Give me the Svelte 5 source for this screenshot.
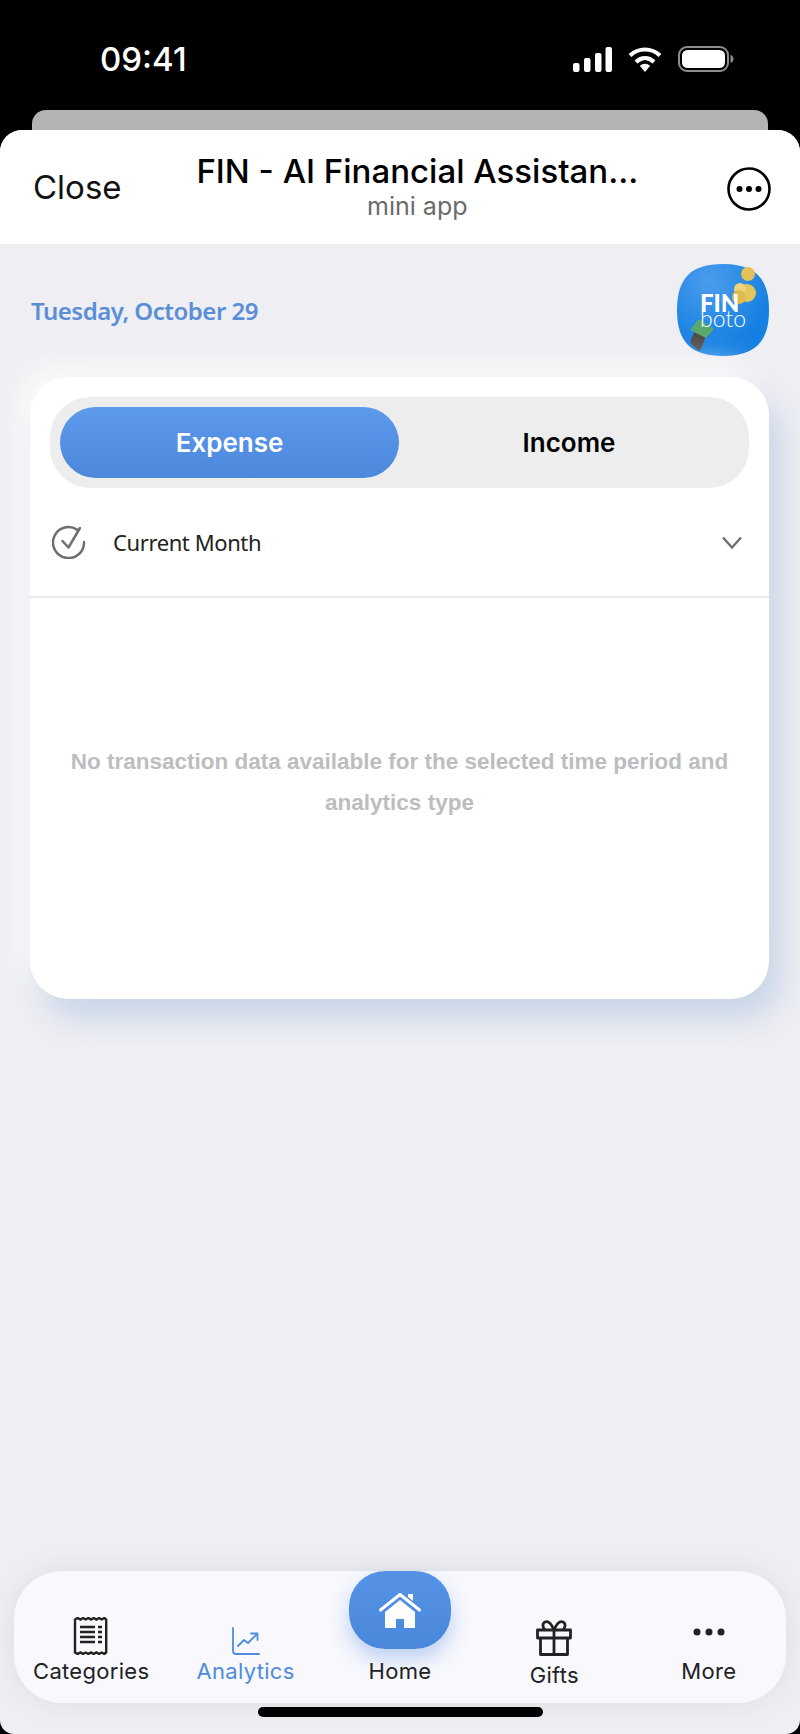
<script>
  const tabs = [
    { label: "Categories", icon: "receipt" },
    { label: "Analytics", icon: "chart", active: true },
    { label: "Home", icon: "home", fab: true },
    { label: "Gifts", icon: "gift", low: true },
    { label: "More", icon: "dots" }
  ];
</script>

<div class="phone">
  <div class="status">
    <span class="time">09:41</span>
    <div class="status-icons">
      <svg width="39" height="25" viewBox="0 0 39 25" fill="#fff">
        <rect x="0" y="16" width="6.5" height="9" rx="2" />
        <rect x="11" y="11" width="6.5" height="14" rx="2" />
        <rect x="22" y="6" width="6.5" height="19" rx="2" />
        <rect x="32.5" y="0" width="6.5" height="25" rx="2" />
      </svg>
      <svg width="34" height="25" viewBox="0 0 34 25">
        <path d="M2 8.5C10.5 .5 23.5 .5 32 8.5" fill="none" stroke="#fff" stroke-width="4.2" />
        <path d="M8 15C13.5 9.8 20.5 9.8 26 15" fill="none" stroke="#fff" stroke-width="4.2" />
        <path d="M11.8 18.8C15 16 19 16 22.2 18.8L17 25Z" fill="#fff" />
      </svg>
      <svg width="56" height="26" viewBox="0 0 56 26">
        <rect x="1" y="1" width="49" height="24" rx="8" fill="none" stroke="#8e8e8e" stroke-width="2" />
        <rect x="4" y="4" width="43" height="18" rx="5.5" fill="#fff" />
        <path d="M52.5 9v8c2-.6 3-2.2 3-4s-1-3.400-3-4z" fill="#8e8e8e" />
      </svg>
    </div>
  </div>
  <div class="peek"></div>

  <div class="sheet">
    <header class="mini-header">
      <span class="close">Close</span>
      <div class="title-wrap">
        <div class="title">FIN - AI Financial Assistan...</div>
        <div class="subtitle">mini app</div>
      </div>
      <svg class="more-btn" width="44" height="44" viewBox="0 0 44 44">
        <circle cx="22" cy="22" r="20.500" fill="none" stroke="#000" stroke-width="2.600" />
        <circle cx="12.500" cy="22" r="3" />
        <circle cx="22" cy="22" r="3" />
        <circle cx="31.500" cy="22" r="3" />
      </svg>
    </header>

    <div class="date-row">
      <span class="date">Tuesday, October 29</span>
      <svg class="logo" width="92" height="92" viewBox="0 0 92 92">
        <defs>
          <radialGradient id="logoBg" cx="0.35" cy="0.2" r="0.7">
            <stop offset="0" stop-color="#4b9cec" />
            <stop offset="1" stop-color="#1580e2" />
          </radialGradient>
        </defs>
        <path d="M46 0C78 0 92 14 92 46S78 92 46 92 0 78 0 46 14 0 46 0Z" fill="url(#logoBg)" />
        <path d="M13 78l6-14 11 6-7 17c-4-2-7-5-10-9Z" fill="#4f4b4a" />
        <path d="M13 66l9-11 15 10-8 9Z" fill="#59a86a" />
        <circle cx="71" cy="10" r="7" fill="#e0c15a" />
        <circle cx="70" cy="29" r="9" fill="#e6c65a" />
        <circle cx="63" cy="25" r="6" fill="#efd57a" />
        <circle cx="62" cy="33" r="7" fill="#dfbc4f" />
        <text class="logo-fin" x="23" y="48">FIN</text>
        <text class="logo-boto" x="23" y="63">boto</text>
      </svg>
    </div>

    <section class="card">
      <div class="toggle">
        <div class="seg active">Expense</div>
        <div class="seg">Income</div>
      </div>

      <div class="period">
        <svg width="34" height="34" viewBox="0 0 34 34" fill="none" stroke="#6f6f6f" stroke-width="2.500" stroke-linecap="round" stroke-linejoin="round">
          <path d="M25 4.600A15.500 15.500 0 1 0 32 17" />
          <path d="M10.500 16l6 6.500L28 3" />
        </svg>
        <span class="period-label">Current Month</span>
        <svg class="chevron" width="20" height="13" viewBox="0 0 20 13" fill="none" stroke="#6f6f6f" stroke-width="2.400">
          <path d="M1 1.500l9 10 9-10" />
        </svg>
      </div>

      <p class="empty">No transaction data available for the selected time period and analytics type</p>
    </section>

    <nav class="tabbar">
      {#each tabs as tab}
        <div class="tab" class:active={tab.active} class:low={tab.low} class:fab-tab={tab.fab}>
          {#if tab.icon === "receipt"}
            <svg width="36" height="38" viewBox="0 0 36 38" fill="none" stroke="#222" stroke-width="2.400">
              <path d="M2 2.500l2.700-1.500 2.700 1.500 2.600-1.500 2.700 1.500 2.700-1.500 2.600 1.500 2.700-1.500 2.700 1.500 2.600-1.500 2.700 1.500 2.700-1.500 1.800 1.500v33l-1.800 1.500-2.700-1.500-2.700 1.500-2.600-1.500-2.700 1.500-2.700-1.500-2.600 1.500-2.700-1.500-2.700 1.500-2.600-1.500-2.700 1.500-2.700-1.500z" />
              <path d="M7 10h15M7 15h15M7 20h15M7 25h15" />
              <path d="M25 10h4M25 15h4M25 20h4M25 25h4" />
            </svg>
          {:else if tab.icon === "chart"}
            <svg width="28" height="28" viewBox="0 0 28 28" fill="none" stroke="#4f8cde" stroke-width="1.800" stroke-linecap="round" stroke-linejoin="round">
              <path d="M1 1v23a3 3 0 0 0 3 3h23" />
              <path d="M6 19l6-6 4 3 9-9" />
              <path d="M19 6.500h6.500V13" />
            </svg>
          {:else if tab.icon === "home"}
            <div class="fab">
              <svg width="42" height="38" viewBox="0 0 42 38" fill="#fff">
                <path d="M29 3h5v7l-5-4z" />
                <path d="M21 3.500L1.500 19" fill="none" stroke="#fff" stroke-width="3" stroke-linecap="round" />
                <path d="M21 3.500L40.500 19" fill="none" stroke="#fff" stroke-width="3" stroke-linecap="round" />
                <path d="M21 9L6 21v16h11v-9h8v9h11V21z" />
              </svg>
            </div>
          {:else if tab.icon === "gift"}
            <svg width="36" height="36" viewBox="0 0 36 36" fill="none" stroke="#222" stroke-width="2.800" stroke-linejoin="round">
              <rect x="1.500" y="10" width="33" height="8" />
              <path d="M4.500 18v16.500h27V18M18 10v24.500" />
              <path d="M18 10C15 3 11.500 1 9 2s-3 5 0 8M18 10c3-7 6.500-9 9-8s3 5 0 8" />
            </svg>
          {:else}
            <svg class="dots" width="32" height="8" viewBox="0 0 32 8" fill="#222">
              <circle cx="4" cy="4" r="3.500" />
              <circle cx="16" cy="4" r="3.500" />
              <circle cx="28" cy="4" r="3.500" />
            </svg>
          {/if}
          <span class="tab-label">{tab.label}</span>
        </div>
      {/each}
    </nav>
    <div class="home-bar"></div>
  </div>
</div>

<style>
  :global(body) {
    margin: 0;
    background: #000;
  }

  .phone {
    width: 800px;
    height: 1734px;
    display: flex;
    flex-direction: column;
    background: #000;
    overflow: hidden;
    font-family: Inter, "Liberation Sans", sans-serif;
  }

  .status {
    height: 110px;
    flex: none;
    box-sizing: border-box;
    padding: 46px 66px 0 100px;
    display: flex;
    justify-content: space-between;
    align-items: flex-start;
    color: #fff;
  }

  .time {
    font-size: 33px;
    font-weight: 500;
    line-height: 26px;
  }

  .status-icons {
    display: flex;
    align-items: center;
    gap: 16px;
    height: 26px;
  }

  .peek {
    height: 20px;
    flex: none;
    margin: 0 32px;
    background: #b3b3b3;
    border-radius: 14px 14px 0 0;
  }

  .sheet {
    flex: 1;
    display: flex;
    flex-direction: column;
    background: #eeeef3;
    border-radius: 22px 22px 14px 14px;
    overflow: hidden;
  }

  .mini-header {
    height: 114px;
    flex: none;
    box-sizing: border-box;
    background: #fff;
    display: flex;
    align-items: flex-start;
    justify-content: space-between;
    padding: 0 29px 0 33px;
  }

  .close {
    font-size: 33px;
    line-height: 40px;
    margin-top: 37px;
    color: #111;
  }

  .title-wrap {
    text-align: center;
    margin-top: 21px;
    margin-left: -14px;
  }

  .title {
    font-size: 33px;
    font-weight: 500;
    line-height: 40px;
    color: #000;
  }

  .subtitle {
    font-size: 25px;
    line-height: 30px;
    color: #6a6a6a;
  }

  .more-btn {
    margin-top: 37px;
  }

  .date-row {
    flex: none;
    display: flex;
    justify-content: space-between;
    align-items: center;
    padding: 20px 31px 0 31px;
  }

  .date {
    font-family: "Noto Sans", sans-serif;
    font-size: 24px;
    font-weight: 600;
    letter-spacing: -0.5px;
    color: #5a8fd8;
  }

  .logo-fin {
    font-family: Lato, sans-serif;
    font-size: 24px;
    font-weight: 900;
    fill: #fff;
  }

  .logo-boto {
    font-family: Lato, sans-serif;
    font-size: 23px;
    font-weight: 300;
    fill: #fff;
  }

  .card {
    flex: none;
    height: 622px;
    box-sizing: border-box;
    margin: 21px 31px 0 30px;
    padding: 20px 0 0;
    background: #fff;
    border-radius: 38px;
    box-shadow: 12px 20px 28px rgba(190, 205, 228, 0.75), -14px -14px 30px rgba(255, 255, 255, 0.75);
  }

  .toggle {
    height: 91px;
    box-sizing: border-box;
    margin: 0 20px;
    padding: 10px;
    display: flex;
    background: #ededed;
    border-radius: 40px;
  }

  .seg {
    flex: 1;
    display: flex;
    align-items: center;
    justify-content: center;
    border-radius: 36px;
    font-size: 26px;
    font-weight: 600;
    color: #000;
  }

  .seg.active {
    flex: none;
    width: 339px;
    color: #fff;
    background: linear-gradient(180deg, #5c9aec, #4c88dc);
  }

  .period {
    height: 110px;
    box-sizing: border-box;
    display: flex;
    align-items: center;
    padding: 0 27px 0 22px;
    border-bottom: 2px solid #e9e9eb;
  }

  .period-label {
    flex: 1;
    margin-left: 27px;
    font-family: "Noto Sans", sans-serif;
    font-size: 22px;
    letter-spacing: -0.4px;
    color: #222;
  }

  .empty {
    margin: 0;
    padding: 143px 40px 0;
    text-align: center;
    font-family: "Liberation Sans", sans-serif;
    font-size: 22.500px;
    font-weight: 700;
    line-height: 41px;
    color: #bdbdbf;
  }

  .tabbar {
    flex: none;
    height: 132px;
    margin: auto 14px 0;
    display: grid;
    grid-template-columns: repeat(5, 1fr);
    background: #f8f8fd;
    border-radius: 48px;
    box-shadow: 0 0 34px rgba(0, 0, 0, 0.07);
  }

  .tab {
    display: flex;
    flex-direction: column;
    align-items: center;
    justify-content: flex-end;
    padding-bottom: 18px;
    color: #222;
  }

  .tab.active {
    color: #4f8cde;
  }

  .tab.low {
    padding-bottom: 14px;
  }

  .tab.fab-tab {
    min-height: 0;
  }

  .tab-label {
    font-size: 22px;
    line-height: 28px;
    letter-spacing: 0.3px;
    margin-top: 2px;
  }

  .tab.low .tab-label {
    margin-top: 5px;
  }

  .dots {
    margin-bottom: 19px;
  }

  .fab {
    width: 102px;
    height: 102px;
    margin-bottom: 6px;
    display: flex;
    align-items: center;
    justify-content: center;
    border-radius: 36px;
    background: linear-gradient(180deg, #5592e6, #4a88dc);
    box-shadow: 0 10px 20px rgba(74, 136, 220, 0.35);
  }

  .home-bar {
    flex: none;
    width: 285px;
    height: 10px;
    margin: 4px auto 17px;
    border-radius: 5px;
    background: #000;
  }
</style>
